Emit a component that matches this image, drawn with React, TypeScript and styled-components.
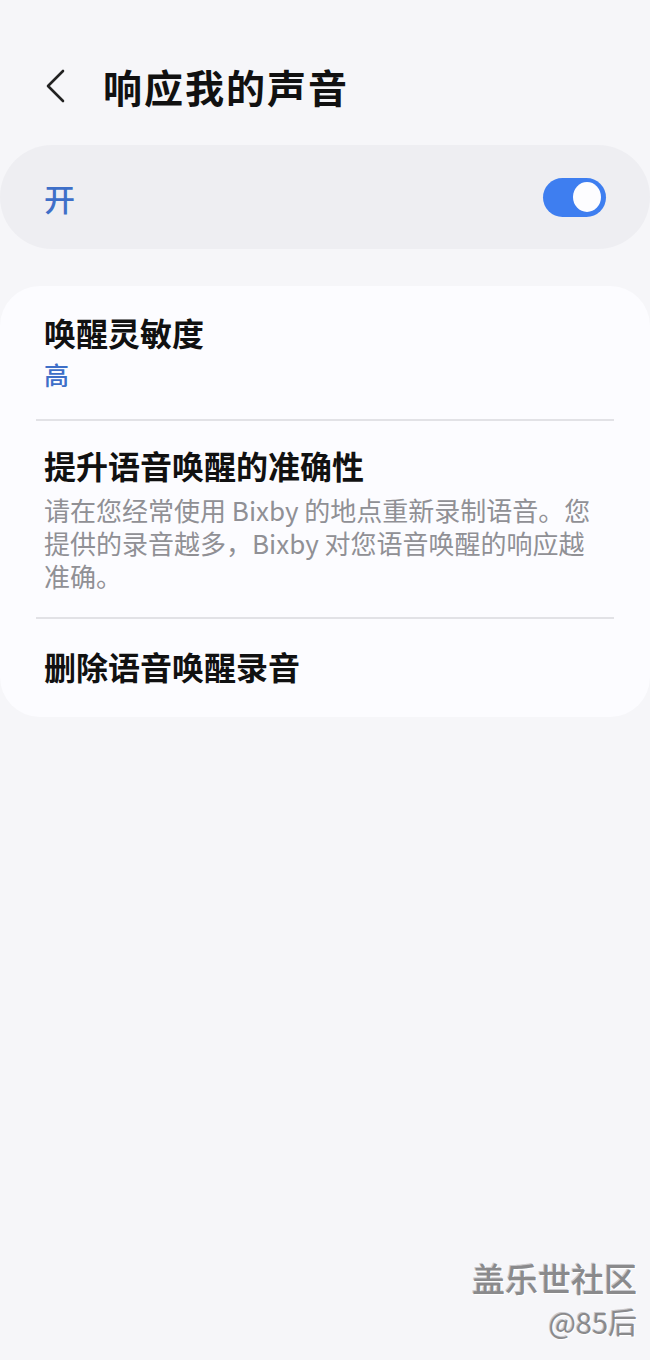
import styled, { createGlobalStyle } from "styled-components";

const GlobalStyle = createGlobalStyle`
  html, body {
    margin: 0;
    padding: 0;
    background: #f6f6f9;
  }
  body {
    font-family: "Noto Sans CJK SC", "Noto Sans", sans-serif;
  }
`;

const Page = styled.div`
  display: flex;
  flex-direction: column;
  width: 650px;
  height: 1360px;
  background: #f6f6f9;
  overflow: hidden;
`;

const Header = styled.div`
  display: flex;
  align-items: center;
  height: 70px;
  margin-top: 51px;
  padding-left: 42px;
  gap: 33px;
`;

const BackButton = styled.button`
  display: flex;
  align-items: center;
  justify-content: center;
  width: 28px;
  height: 40px;
  padding: 0;
  border: none;
  background: none;
`;

const Title = styled.h1`
  margin: 0;
  font-size: 39px;
  font-weight: 700;
  color: #111;
  letter-spacing: 2px;
`;

const SwitchCard = styled.div`
  display: flex;
  align-items: center;
  justify-content: space-between;
  height: 104px;
  margin-top: 24px;
  padding: 0 44px;
  border-radius: 52px;
  background: #eeeef2;
`;

const SwitchLabel = styled.span`
  font-size: 31px;
  font-weight: 500;
  color: #3e6fc8;
`;

const Toggle = styled.div<{ on?: boolean }>`
  display: flex;
  align-items: center;
  justify-content: ${(p) => (p.on ? "flex-end" : "flex-start")};
  width: 63px;
  height: 39px;
  padding: 0 5px;
  box-sizing: border-box;
  border-radius: 20px;
  background: ${(p) => (p.on ? "#3e7ef0" : "#c5c5ca")};
`;

const Knob = styled.div`
  width: 28px;
  height: 30px;
  border-radius: 50%;
  background: #fdfdff;
`;

const ListCard = styled.div`
  display: flex;
  flex-direction: column;
  margin-top: 37px;
  border-radius: 40px;
  background: #fcfcff;
  padding: 0 36px;
`;

const Item = styled.div<{ pad: string }>`
  display: flex;
  flex-direction: column;
  padding: ${(p) => p.pad};
  border-bottom: 2px solid #e2e2e6;

  &:last-child {
    border-bottom: none;
  }
`;

const ItemTitle = styled.div`
  font-size: 32px;
  font-weight: 700;
  line-height: 42px;
  color: #111;
`;

const ItemValue = styled.div`
  font-size: 25px;
  font-weight: 500;
  line-height: 34px;
  color: #3e6fc8;
  margin-top: 4px;
`;

const ItemDesc = styled.div`
  font-size: 26px;
  line-height: 33px;
  color: #909095;
  margin-top: 7px;
  white-space: nowrap;
`;

const Watermark = styled.div`
  display: flex;
  flex-direction: column;
  align-items: flex-end;
  margin-top: auto;
  padding: 0 13px 17px 0;
  color: #8a8a8c;
  text-shadow: 1px 1px 0 #fff, -1px -1px 0 #c8c8cc;
`;

const MarkName = styled.span`
  font-size: 33px;
  font-weight: 500;
  line-height: 42px;
`;

const MarkUser = styled.span`
  font-size: 29px;
  line-height: 44px;
`;

const ChevronLeft = () => (
  <svg width="24" height="36" viewBox="0 0 24 36" fill="none">
    <path
      d="M19 3 L4 18 L19 33"
      stroke="#222"
      strokeWidth="2.6"
      strokeLinecap="round"
      strokeLinejoin="round"
    />
  </svg>
);

export default function App() {
  return (
    <Page>
      <GlobalStyle />
      <Header>
        <BackButton aria-label="返回">
          <ChevronLeft />
        </BackButton>
        <Title>响应我的声音</Title>
      </Header>

      <SwitchCard>
        <SwitchLabel>开</SwitchLabel>
        <Toggle on>
          <Knob />
        </Toggle>
      </SwitchCard>

      <ListCard>
        <Item pad="25px 8px 28px">
          <ItemTitle>唤醒灵敏度</ItemTitle>
          <ItemValue>高</ItemValue>
        </Item>
        <Item pad="23px 8px 25px">
          <ItemTitle>提升语音唤醒的准确性</ItemTitle>
          <ItemDesc>
            请在您经常使用 Bixby 的地点重新录制语音。您
            <br />
            提供的录音越多，Bixby 对您语音唤醒的响应越
            <br />
            准确。
          </ItemDesc>
        </Item>
        <Item pad="26px 8px 30px">
          <ItemTitle>删除语音唤醒录音</ItemTitle>
        </Item>
      </ListCard>

      <Watermark>
        <MarkName>盖乐世社区</MarkName>
        <MarkUser>@85后</MarkUser>
      </Watermark>
    </Page>
  );
}
